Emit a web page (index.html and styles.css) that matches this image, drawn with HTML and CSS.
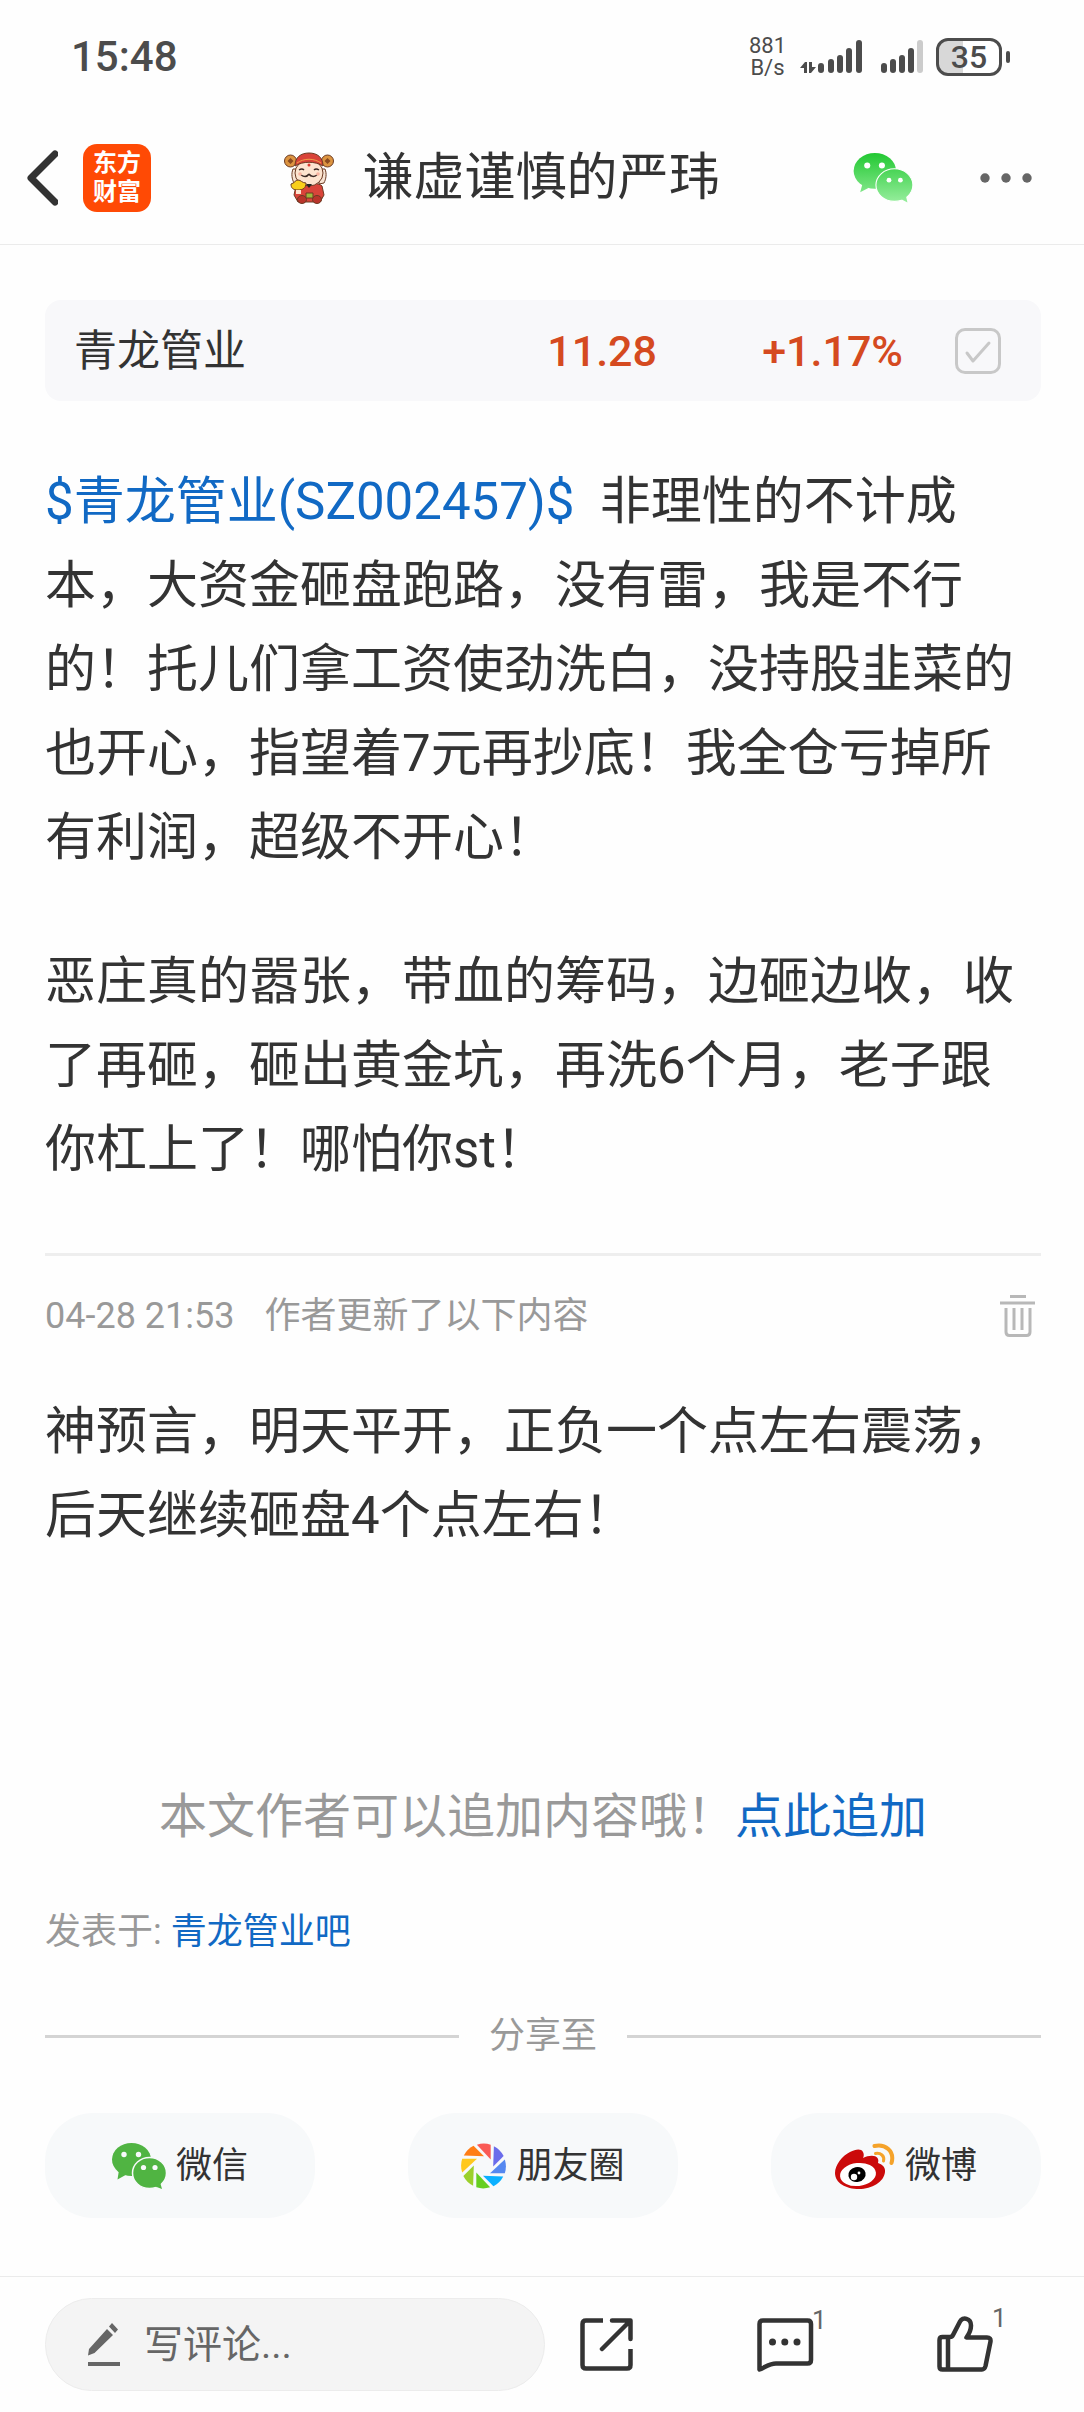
FILE: index.html
```html
<!DOCTYPE html>
<html lang="zh-CN">
<head>
<meta charset="utf-8">
<meta name="viewport" content="width=device-width, initial-scale=1">
<title>谦虚谨慎的严玮</title>
<link rel="stylesheet" href="styles.css">
</head>
<body>
<div class="status">
  <span class="status-time">15:48</span>
  <div class="status-right">
    <div class="net-speed"><span>881</span><span>B/s</span></div>
    <svg class="signals" width="124" height="36" viewBox="0 0 124 36" fill="#4c4c4c" aria-hidden="true">
      <path d="M0 29l5-6h2v11H4v-5zM16 28l-5 6H9V23h3v5z"/>
      <rect x="18" y="24" width="6" height="10" rx="3"/><rect x="28" y="20" width="6" height="14" rx="3"/><rect x="37" y="16" width="6" height="18" rx="3"/><rect x="46" y="9" width="6" height="25" rx="3"/><rect x="56" y="1" width="6" height="33" rx="3"/>
      <rect x="81" y="24" width="6" height="10" rx="3"/><rect x="90" y="20" width="6" height="14" rx="3"/><rect x="99" y="16" width="6" height="18" rx="3"/><rect x="108" y="9" width="6" height="25" rx="3"/><rect x="117" y="1" width="6" height="33" rx="3" fill="#ccc"/>
    </svg>
    <div class="battery">35</div>
  </div>
</div>

<header class="topbar">
  <button class="icon-button back" aria-label="返回">
    <svg width="32" height="56" viewBox="0 0 32 56" fill="none" stroke="#333" stroke-width="7" stroke-linecap="round" stroke-linejoin="round"><path d="M29 4L5 28l24 24"/></svg>
  </button>
  <a class="brand" href="#"><span>东方</span><span>财富</span></a>
  <div class="author">
    <svg width="50" height="52" viewBox="0 0 50 52" aria-hidden="true">
      <g stroke="#6b3a22" stroke-width="1">
        <circle cx="6.500" cy="9" r="6" fill="#dc9440"/><circle cx="43.500" cy="9" r="6" fill="#dc9440"/>
        <path d="M9 17c-2 5-1 10 1 14l5 1V17zM41 17c2 5 1 10-1 14l-5 1V17z" fill="#f7e3d3"/>
        <path d="M12 34c3-4 23-4 26 0l2 9-4 7H14l-4-7z" fill="#d9443a"/>
        <ellipse cx="25" cy="21" rx="14" ry="13" fill="#fde4cf"/>
        <path d="M11 14C11 5 17 1 25 1s14 4 14 13c-8-5-20-5-28 0z" fill="#d94338"/>
        <path d="M13 11c7-5 17-5 24 0" stroke="#f1a347" fill="none"/>
        <ellipse cx="18" cy="47.500" rx="4.500" ry="4" fill="#b9342b"/><ellipse cx="33" cy="47.500" rx="4.500" ry="4" fill="#b9342b"/>
        <path d="M7 32c4-1 4-4 7-4s4 3 8 3c0 5-3 7-8 7s-7-2-7-6z" fill="#f9cf1b"/>
        <path d="M22 41h7v5h-7z" fill="#9fb83d"/>
      </g>
      <path d="M12 38h5v4h-5z" fill="#fde4cf"/>
      <path d="M6.500 6l3 3-3 3-3-3zM43.500 6l3 3-3 3-3-3z" fill="#8a4a1f"/>
      <path d="M15 18q3-2 5 0M30 18q2-2 5 0M25 22c-2 3-5 3-8 1M25 22c2 3 5 3 8 1" stroke="#3b2a25" stroke-width="1.500" fill="none"/>
      <path d="M22 32h6l-3 4z" fill="#222"/><circle cx="25" cy="13" r="1.500" fill="#d9382f"/>
      <circle cx="16" cy="22" r="1.800" fill="#f8b3a0"/><circle cx="34" cy="22" r="1.800" fill="#f8b3a0"/>
    </svg>
    <h1 class="author-name">谦虚谨慎的严玮</h1>
  </div>
  <button class="icon-button wechat-top" aria-label="分享到微信">
    <svg width="60" height="50" viewBox="0 0 54 46">
      <defs><linearGradient id="wx" x1="0" y1="0" x2="0" y2="46" gradientUnits="userSpaceOnUse"><stop offset="0" stop-color="#22c832"/><stop offset="1" stop-color="#98ee9e"/></linearGradient></defs>
      <g fill="url(#wx)"><ellipse cx="19.500" cy="16.500" rx="19.500" ry="16.500"/><path d="M8 29l-2 7 8-4z"/></g>
      <g fill="url(#wx)" stroke="#fff"><ellipse cx="37.500" cy="29.500" rx="17" ry="15"/></g>
      <path d="M43 42l6.500 3.500L48 39z" fill="url(#wx)"/>
      <g fill="#fff"><circle cx="12.500" cy="11.500" r="2.800"/><circle cx="26" cy="11.500" r="2.800"/><circle cx="32.500" cy="25" r="2.200"/><circle cx="43" cy="25" r="2.200"/></g>
    </svg>
  </button>
  <button class="icon-button more" aria-label="更多">
    <svg width="52" height="10" viewBox="0 0 52 10" fill="#666"><circle cx="5" cy="5" r="4.700"/><circle cx="26" cy="5" r="4.700"/><circle cx="47" cy="5" r="4.700"/></svg>
  </button>
</header>

<main class="post">
  <div class="stock">
    <a class="stock-name" href="#">青龙管业</a>
    <span class="stock-price">11.28</span>
    <span class="stock-change">+1.17%</span>
    <label class="stock-check">
      <input type="checkbox" aria-label="已加自选">
      <svg width="46" height="46" viewBox="0 0 46 46" fill="none" stroke="#c8c8c8" stroke-width="3" stroke-linecap="round" stroke-linejoin="round" aria-hidden="true"><path d="M12 25l6 8 16-18"/></svg>
    </label>
  </div>

  <article class="body">
    <p><a href="#">$青龙管业(SZ002457)$</a>&nbsp; 非理性的不计成本，大资金砸盘跑路，没有雷，我是不行的！托儿们拿工资使劲洗白，没持股韭菜的也开心，指望着7元再抄底！我全仓亏掉所有利润，超级不开心！</p>
    <p>恶庄真的嚣张，带血的筹码，边砸边收，收了再砸，砸出黄金坑，再洗6个月，老子跟你杠上了！哪怕你st！</p>
  </article>

  <section class="update">
    <div class="update-meta">
      <time>04-28 21:53</time>
      <span>作者更新了以下内容</span>
      <button class="icon-button delete" aria-label="删除">
        <svg width="35" height="44" viewBox="0 0 35 44" fill="none" stroke="#b8b8b8" stroke-width="3"><path d="M10 2.500h16M0 9h35M6 14v24q0 3.500 3.500 3.500h17q3.500 0 3.500-3.500V14M14 14v22M22 14v22"/></svg>
      </button>
    </div>
    <div class="body"><p>神预言，明天平开，正负一个点左右震荡，后天继续砸盘4个点左右！</p></div>
  </section>

  <p class="append">本文作者可以追加内容哦！<a href="#">点此追加</a></p>
  <p class="posted">发表于: <a href="#">青龙管业吧</a></p>

  <h2 class="share-title">分享至</h2>
  <div class="share">
    <button class="share-button">
      <svg width="54" height="46" viewBox="0 0 54 46" aria-hidden="true">
        <g fill="#50b442"><ellipse cx="19.500" cy="16.500" rx="19.500" ry="16.500"/><path d="M7 27l-1.500 9.500 9-5z"/>
        <ellipse cx="37.500" cy="30" rx="17" ry="15.500" stroke="#f7f9fa" stroke-width="1.500"/><path d="M42 43l8 3-2-7z"/></g>
        <g fill="#f7f9fa"><circle cx="12" cy="11.500" r="2.700"/><circle cx="26.500" cy="11.500" r="2.700"/><circle cx="31.500" cy="24.500" r="2.600"/><circle cx="43" cy="24.500" r="2.600"/></g>
      </svg>微信</button>
    <button class="share-button">
      <svg width="45" height="46" viewBox="0 0 45 45" aria-hidden="true">
        <defs><path id="blade" d="M15.900 1.200L29.700 16V1.200A22.500 22.500 0 0 0 15.900 1.200z"/></defs>
        <use href="#blade" fill="#fa5a55"/>
        <use href="#blade" fill="#6a6ceb" transform="rotate(45 22.500 22.500)"/>
        <use href="#blade" fill="#5588f0" transform="rotate(90 22.500 22.500)"/>
        <use href="#blade" fill="#0bb0ff" transform="rotate(135 22.500 22.500)"/>
        <use href="#blade" fill="#66cf20" transform="rotate(180 22.500 22.500)"/>
        <use href="#blade" fill="#9bd02b" transform="rotate(225 22.500 22.500)"/>
        <use href="#blade" fill="#ffc81e" transform="rotate(270 22.500 22.500)"/>
        <use href="#blade" fill="#ff7d14" transform="rotate(315 22.500 22.500)"/>
      </svg>朋友圈</button>
    <button class="share-button">
      <svg width="60" height="46" viewBox="0 0 60 46" aria-hidden="true">
        <path d="M0 30C0 22 7 13 15 9c6-3 11-3.500 13 0 1 2 1 4 0 6 5-2.500 12-3.500 14.500 0 1 1.500 1 3 .500 5 5 1.500 7.500 5 7 9C49 39 37 46 24 46 11 46 0 40 0 30z" fill="#cb0a0a"/>
        <ellipse cx="23" cy="31.500" rx="18" ry="11.500" fill="#fff" transform="rotate(-6 23 31.500)"/>
        <ellipse cx="22" cy="31.500" rx="8.700" ry="7.500" transform="rotate(-12 22 31.500)"/>
        <circle cx="19" cy="34" r="3.200" fill="#fff"/><circle cx="24" cy="30" r="1.400" fill="#fff"/>
        <g fill="none" stroke="#f5a32a" stroke-linecap="round"><path d="M39.500 3C50 .500 60 8 56.500 20" stroke-width="4"/><path d="M40.500 10.500c5-1 9.500 2.500 8 7.500" stroke-width="3"/></g>
      </svg>微博</button>
  </div>
</main>

<footer class="bottombar">
  <label class="comment-box">
    <svg width="32" height="43" viewBox="0 0 32 43" fill="#666" aria-hidden="true"><path d="M0 32.500l1-6.500L19 6l6 6L6.500 30zM21 3.500L24 0l6 6.500L27 10zM0 39h32v4H0z"/></svg>
    <input type="text" placeholder="写评论..." aria-label="写评论">
  </label>
  <div class="actions">
    <button class="icon-button" aria-label="转发">
      <svg width="54" height="54" viewBox="0 0 54 54" fill="none" stroke="#333" stroke-width="4.500" stroke-linejoin="round"><path d="M23 2.500H6Q2.500 2.500 2.500 6v41q0 3.500 3.500 3.500h41q3.500 0 3.500-3.500V31"/><path d="M32 2.500h18.500V21M50 3L22 31" stroke-linecap="round"/></svg>
    </button>
    <button class="icon-button" aria-label="评论">
      <svg width="57" height="54" viewBox="0 0 57 54"><path d="M2.500 51.500V6Q2.500 2.500 6 2.500h44.500Q54 2.500 54 6v36q0 3.500-3.500 3.500H19C12 45.500 9 49 2.500 51.500z" fill="none" stroke="#333" stroke-width="4.500" stroke-linejoin="round"/><g fill="#333"><circle cx="15.500" cy="24" r="3.500"/><circle cx="27.800" cy="24" r="3.500"/><circle cx="40" cy="24" r="3.500"/></g></svg>
      <span class="count">1</span>
    </button>
    <button class="icon-button" aria-label="点赞">
      <svg width="57" height="57" viewBox="0 0 57 57" fill="none" stroke="#333" stroke-width="4.500" stroke-linejoin="round"><path d="M5.500 21H13q2 0 3-2l7-13.500C25.500 .500 34 2 34 9.500 34 14 32 18 29.500 21.500H50q4 0 3.500 4L48.500 50q-1 3.500-3.500 3.500H5.500Q2.500 53.500 2.500 50.500V24q0-3 3-3zM11 21.500v32"/></svg>
      <span class="count">1</span>
    </button>
  </div>
</footer>
</body>
</html>
```
FILE: styles.css
```css
* {
  box-sizing: border-box;
}

body {
  display: flex;
  flex-direction: column;
  min-height: 100vh;
  margin: 0;
  background: #fefefe;
  color: #333;
  font-family: Roboto, "Noto Sans CJK SC", sans-serif;
}

h1, h2, p {
  margin: 0;
  font-weight: 400;
}

a {
  color: #1169c4;
  text-decoration: none;
}

button, input {
  font: inherit;
  color: inherit;
}

svg {
  display: block;
  flex: none;
}

.icon-button {
  position: relative;
  padding: 0;
  border: 0;
  background: none;
}

/* Status bar */
.status {
  display: flex;
  align-items: center;
  justify-content: space-between;
  height: 112px;
  padding: 2px 74px 0 71px;
  color: #4c4c4c;
}

.status-time {
  font-size: 42px;
  font-weight: 500;
  line-height: 50px;
}

.status-right {
  display: flex;
  align-items: center;
}

.net-speed {
  display: flex;
  flex-direction: column;
  align-items: center;
  margin-right: 14px;
  font-size: 22px;
  line-height: 22px;
}

.signals {
  margin-right: 12px;
}

.battery {
  position: relative;
  width: 66px;
  border: 3px solid #4c4c4c;
  border-radius: 12px;
  margin-right: 8px;
  background: linear-gradient(to right, #d8d8d8 40%, #fff 40%);
  font-size: 32px;
  font-weight: 500;
  line-height: 32px;
  text-align: center;
}

.battery::after {
  content: "";
  position: absolute;
  top: 10px;
  right: -11px;
  width: 4px;
  height: 12px;
  border-radius: 2px;
  background: #4c4c4c;
}

/* Title bar */
.topbar {
  display: flex;
  align-items: center;
  height: 133px;
  padding: 0 52px 0 26px;
  border-bottom: 1px solid #ebebeb;
}

.brand {
  display: flex;
  flex-direction: column;
  align-items: center;
  justify-content: center;
  width: 68px;
  height: 68px;
  margin-left: 25px;
  border-radius: 14px;
  background: #ff4a05;
  color: #fff;
  font-size: 24px;
  font-weight: 700;
  line-height: 29px;
}

.author {
  display: flex;
  flex: 1;
  align-items: center;
  justify-content: center;
  gap: 28px;
}

.author-name {
  font-size: 51px;
  line-height: 60px;
}

.more {
  margin-left: 67px;
}

/* Post */
.post {
  padding: 55px 43px 57px 45px;
}

.stock {
  display: flex;
  align-items: center;
  height: 101px;
  padding: 0 40px 0 29px;
  border-radius: 16px;
  background: #f8f8fa;
  font-size: 43px;
  line-height: 54px;
}

.stock-name {
  flex: 1;
  color: #333;
}

.stock-price, .stock-change {
  color: #d54a20;
  font-weight: 500;
  text-align: right;
}

.stock-change {
  width: 246px;
}

.stock-check {
  position: relative;
  margin-left: 52px;
}

.stock-check input {
  display: block;
  width: 46px;
  height: 46px;
  margin: 0;
  border: 3px solid #c8c8c8;
  border-radius: 10px;
  appearance: none;
}

.stock-check svg {
  position: absolute;
  inset: 0;
}

.body {
  font-size: 51px;
  line-height: 84px;
}

article.body {
  padding: 59px 0 61px;
}

.body p + p {
  margin-top: 60px;
}

.update {
  border-top: 3px solid #eee;
}

.update-meta {
  display: flex;
  align-items: center;
  gap: 30px;
  height: 120px;
  margin-bottom: 14px;
  color: #999;
  font-size: 36px;
  line-height: 54px;
}

.delete {
  margin-left: auto;
  margin-right: 6px;
}

.append {
  margin-top: 223px;
  color: #999;
  font-size: 48px;
  line-height: 72px;
  text-align: center;
}

.posted {
  margin-top: 52px;
  color: #999;
  font-size: 36px;
  line-height: 54px;
}

.share-title {
  display: flex;
  align-items: center;
  gap: 30px;
  margin-top: 50px;
  color: #999;
  font-size: 36px;
  line-height: 54px;
}

.share-title::before, .share-title::after {
  content: "";
  flex: 1;
  height: 3px;
  background: #d4d4d4;
}

.share {
  display: flex;
  justify-content: space-between;
  margin-top: 50px;
}

.share-button {
  display: flex;
  flex: 0 1 270px;
  align-items: center;
  justify-content: center;
  gap: 10px;
  height: 105px;
  padding: 0;
  border: 0;
  border-radius: 48px;
  background: #f7f9fa;
  font-size: 36px;
  line-height: 54px;
}

/* Bottom bar */
.bottombar {
  display: flex;
  align-items: center;
  gap: 35px;
  margin-top: auto;
  padding: 21px 90px 21px 45px;
  border-top: 1px solid #ebebeb;
}

.comment-box {
  display: flex;
  flex: 0 1 500px;
  align-items: center;
  gap: 24px;
  min-width: 0;
  height: 93px;
  padding: 0 42px;
  border: 1px solid #ececec;
  border-radius: 48px;
  background: #f4f4f4;
}

.comment-box input {
  flex: 1;
  min-width: 0;
  padding: 0;
  border: 0;
  background: none;
  font-size: 39px;
  outline: 0;
}

.comment-box input::placeholder {
  color: #666;
  opacity: 1;
}

.actions {
  display: flex;
  flex: 1;
  align-items: center;
  justify-content: space-between;
}

.count {
  position: absolute;
  left: 100%;
  bottom: 100%;
  margin: 0 0 -18px -2px;
  color: #666;
  font-size: 26px;
  line-height: 32px;
}
```
